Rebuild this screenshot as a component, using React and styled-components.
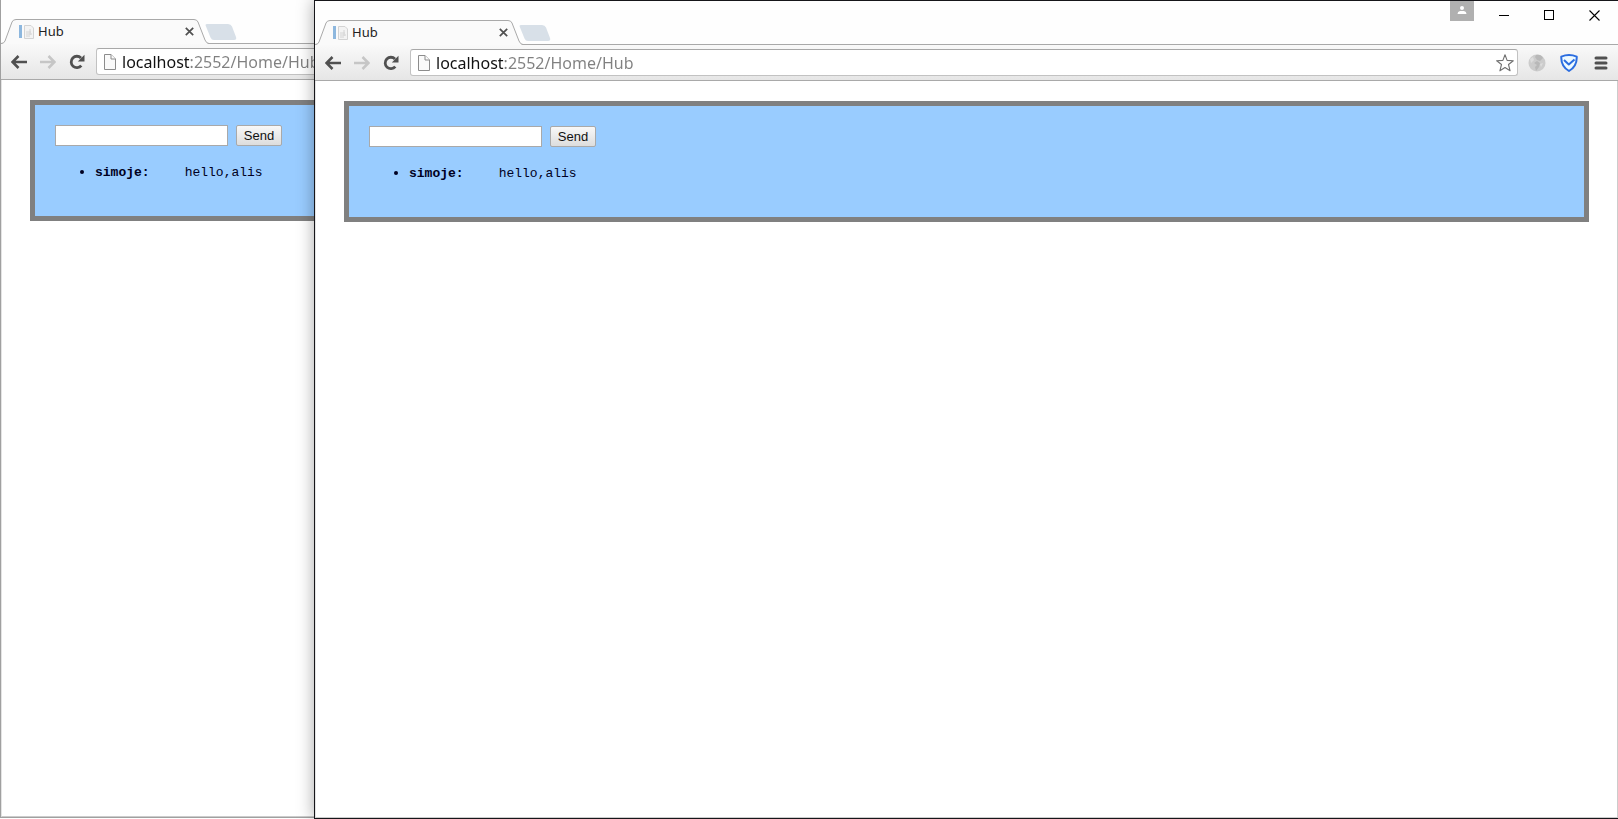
import React, { useState } from 'react';
import styled, { createGlobalStyle, ThemeProvider } from 'styled-components';

const theme = {
  colors: {
    chrome: '#fefefe',
    line: '#a9a9a9',
    icon: '#505050',
    iconMuted: '#c6c6c6',
    panel: '#99ccff',
    panelBorder: '#808080',
  },
  fonts: {
    ui: '"Noto Sans", "Open Sans", sans-serif',
    control: '"Liberation Sans", Arial, sans-serif',
    page: '"Liberation Mono", monospace',
  },
};

const GlobalStyle = createGlobalStyle`
  * {
    box-sizing: border-box;
  }

  body {
    margin: 0;
    background: #ffffff;
  }

  button,
  input {
    margin: 0;
    padding: 0;
  }
`;

const Desktop = styled.div`
  position: relative;
  height: 100vh;
  overflow: hidden;
`;

const Window = styled.section`
  position: absolute;
  top: 0;
  bottom: ${props => (props.$active ? '0' : '1px')};
  left: ${props => (props.$active ? '314px' : '0')};
  width: calc(100% - 314px);
  display: flex;
  flex-direction: column;
  background: ${props => props.theme.colors.chrome};
  border: 1px solid ${props => (props.$active ? '#16161a' : '#a0a0a0')};
  border-top-width: ${props => (props.$active ? '1px' : '0')};
  border-right-width: 0;
  box-shadow: ${props => (props.$active ? '0 0 16px rgba(0, 0, 0, 0.35)' : 'none')};
`;

const TabStrip = styled.header`
  display: flex;
  justify-content: space-between;
  height: 44px;
  border-bottom: 1px solid ${props => props.theme.colors.line};
`;

const Tabs = styled.div`
  display: flex;
  align-items: flex-end;
`;

const Tab = styled.div`
  position: relative;
  display: flex;
  align-items: center;
  gap: 3px;
  width: 206px;
  height: 25px;
  margin-bottom: -1px;
  padding: 0 10px 1px 18px;
  font: 13px/16px ${props => props.theme.fonts.ui};
  color: #222222;
`;

const TabShape = styled.svg`
  position: absolute;
  top: 0;
  left: 0;
`;

const TabIcon = styled.svg`
  position: relative;
`;

const TabTitle = styled.span`
  position: relative;
  flex: 1;
`;

const IconButton = styled.button`
  position: relative;
  display: flex;
  align-items: center;
  justify-content: center;
  flex: none;
  width: ${props => props.$width || 16}px;
  height: ${props => props.$height || 16}px;
  border: 0;
  background: ${props => props.$background || 'none'};
  color: ${props => (props.$muted ? props.theme.colors.iconMuted : props.theme.colors.icon)};

  svg {
    flex: none;
  }
`;

const NewTab = styled(IconButton)`
  align-self: flex-end;
  margin-bottom: 3px;
  margin-left: -2px;
`;

const WindowControls = styled.div`
  display: flex;
  align-items: flex-start;
  padding-right: 1px;
`;

const Profile = styled(IconButton)`
  margin-right: 8px;
`;

const Toolbar = styled.div`
  display: flex;
  align-items: center;
  height: 36px;
  padding: 0 9px 0 10px;
  background: linear-gradient(#f9f9f9, #e6e6e6);
  border-bottom: 1px solid ${props => props.theme.colors.line};
`;

const NavButtons = styled.div`
  display: flex;
  gap: 13px;
  margin-right: 11px;
`;

const Extensions = styled.div`
  display: flex;
  gap: 16px;
  margin-left: 11px;
`;

const Omnibox = styled.div`
  flex: 1;
  display: flex;
  align-items: center;
  gap: 6px;
  height: 27px;
  padding: 0 3px 0 7px;
  background: #ffffff;
  border: 1px solid #c2c2c2;
  border-top-color: #a8a8a8;
  border-radius: 3px;
`;

const Address = styled.input`
  flex: 1;
  min-width: 0;
  height: 24px;
  border: 0;
  outline: 0;
  font: 16px/24px ${props => props.theme.fonts.ui};
  color: transparent;
  background: linear-gradient(to right, #111111 68px, #808080 68px);
  background-clip: text;
`;

const Page = styled.main`
  flex: 1;
  padding: 20px 28px;
  background: #ffffff;
  border: 1px solid #cccccc;
  border-top: 0;
  border-left-color: #e4e4e4;
`;

const ChatPanel = styled.div`
  padding: 20px;
  background: ${props => props.theme.colors.panel};
  border: 5px solid ${props => props.theme.colors.panelBorder};
`;

const MessageForm = styled.form`
  display: flex;
  gap: 8px;
  height: 22px;
`;

const MessageInput = styled.input`
  width: 173px;
  height: 21px;
  padding: 1px 2px;
  border: 1px solid #a9a9a9;
  background: #ffffff;
  font: 13px ${props => props.theme.fonts.control};
`;

const SendButton = styled.button`
  width: 46px;
  height: 21px;
  border: 1px solid #a9a9a9;
  border-radius: 2px;
  background: linear-gradient(#f8f8f8, #dddddd);
  font: 13px/16px ${props => props.theme.fonts.control};
  color: #111111;
`;

const MessageList = styled.ul`
  margin: 16px 0 14px;
  padding-left: 40px;
  font: 13px/19px ${props => props.theme.fonts.page};
  color: #000022;
`;

const Message = styled.li`
  &::marker {
    font-size: 16px;
  }
`;

const MessageText = styled.span`
  margin-left: 35px;
`;

const BackIcon = ({ flipped }) => (
  <svg width="16" height="14" viewBox="0 0 16 14" fill="none" stroke="currentColor" strokeWidth="2.6">
    <path d={flipped ? 'M0 7H14M8.5 1l6 6-6 6' : 'M16 7H2M7.5 1l-6 6 6 6'} />
  </svg>
);

const ReloadIcon = () => (
  <svg width="16" height="16" viewBox="0 0 16 16">
    <path d="M12.3 11.6A5.7 5.7 0 1 1 12 4" fill="none" stroke="currentColor" strokeWidth="2.8" />
    <path d="M15.5 0.8V7.5H8.8z" fill="currentColor" />
  </svg>
);

const FileIcon = () => (
  <svg width="12" height="16" viewBox="0 0 12 16" fill="#fafafa" stroke="#8c8c8c">
    <path d="M0.5 0.5H7L11.5 5V15.5H0.5z" />
    <path d="M7 0.5V5H11.5" />
  </svg>
);

const StarIcon = () => (
  <svg width="18" height="18" viewBox="0 0 18 18" fill="#ffffff" stroke="#707070" strokeWidth="1.1" strokeLinejoin="round">
    <path d="M9 0.8L11.1 6.4L17.3 6.7L12.5 10.5L14.1 16.8L9 13.5L3.9 16.8L5.5 10.5L0.7 6.7L6.9 6.4z" />
  </svg>
);

const GlobeIcon = () => (
  <svg width="18" height="18" viewBox="0 0 18 18">
    <circle cx="9" cy="9" r="8.5" fill="#cccccc" />
    <path d="M8 1q5-1 7 3l-3 3-3-1-2-3zM9 7l3 2-1 4-3 4-1-4 2-2-3-2z" fill="#b8b8b8" />
    <path d="M2 5l3-2 1 3-3 3zM12 10l3-1-2 4z" fill="#dddddd" />
  </svg>
);

const ShieldIcon = () => (
  <svg width="18" height="18" viewBox="0 0 18 18" fill="#eefaff" stroke="#2b6de0" strokeWidth="2" strokeLinejoin="round">
    <path d="M1.3 2.6Q9 -0.4 16.7 2.6Q17.2 12 9 17Q0.8 12 1.3 2.6z" />
    <path d="M4 6L8.8 10.5L14.5 5.5" fill="none" />
  </svg>
);

const MenuIcon = () => (
  <svg width="14" height="14" viewBox="0 0 14 14" stroke="currentColor" strokeWidth="3" strokeLinecap="round">
    <path d="M2 2H12M2 7H12M2 12H12" />
  </svg>
);

const BrowserTab = ({ title }) => (
  <Tab>
    <TabShape width="208" height="25" viewBox="0 0 208 25">
      <path d="M0 25Q3 24.5 4 22L11 3Q12 0.5 15 0.5H193Q196 0.5 197 3L204 21Q205.5 24.5 208 25z" fill="#fafafa" />
      <path d="M0 24.5Q3 24.5 4 22L11 3Q12 0.5 15 0.5H193Q196 0.5 197 3L204 21Q205.5 24.5 208 24.5" fill="none" stroke="#a9a9a9" />
    </TabShape>
    <TabIcon width="16" height="16" viewBox="0 0 16 16">
      <rect x="0" y="2" width="3" height="13" fill="#8db7de" />
      <path d="M5.5 2.5H12L14.5 5V15.5H5.5z" fill="#f3f3f3" stroke="#d3d3d3" />
      <path d="M7 9H12M7 11H13M7 13H11M11 6V12" stroke="#d4d4d4" />
    </TabIcon>
    <TabTitle>{title}</TabTitle>
    <IconButton aria-label="Close tab">
      <svg width="9" height="9" viewBox="0 0 9 9" stroke="currentColor" strokeWidth="1.7">
        <path d="M0.8 0.8L8.2 8.2M8.2 0.8L0.8 8.2" />
      </svg>
    </IconButton>
  </Tab>
);

const Controls = () => (
  <WindowControls>
    <Profile aria-label="Profile" $width={24} $height={20} $background="#b0b0b0">
      <svg width="10" height="10" viewBox="0 0 10 10" fill="#ffffff">
        <circle cx="5" cy="2" r="2" />
        <path d="M0.5 8Q0.5 5.5 3 5H7Q9.5 5.5 9.5 8z" />
      </svg>
    </Profile>
    <IconButton aria-label="Minimize" $width={45} $height={28}>
      <svg width="11" height="11" viewBox="0 0 11 11" stroke="#000000">
        <path d="M0 5.5H10" />
      </svg>
    </IconButton>
    <IconButton aria-label="Maximize" $width={45} $height={28}>
      <svg width="11" height="11" viewBox="0 0 11 11" fill="none" stroke="#000000">
        <rect x="0.5" y="0.5" width="9" height="9" />
      </svg>
    </IconButton>
    <IconButton aria-label="Close" $width={45} $height={28}>
      <svg width="11" height="11" viewBox="0 0 11 11" stroke="#000000" strokeWidth="1.1">
        <path d="M0.5 0.5L10.5 10.5M10.5 0.5L0.5 10.5" />
      </svg>
    </IconButton>
  </WindowControls>
);

const Chat = () => {
  const [text, setText] = useState('');
  const [messages, setMessages] = useState([{ name: 'simoje', text: 'hello,alis' }]);

  const handleSubmit = e => {
    e.preventDefault();
    if (!text) return;
    setMessages([...messages, { name: 'simoje', text }]);
    setText('');
  };

  return (
    <ChatPanel>
      <MessageForm onSubmit={handleSubmit}>
        <MessageInput aria-label="Message" value={text} onChange={e => setText(e.target.value)} />
        <SendButton type="submit">Send</SendButton>
      </MessageForm>
      <MessageList>
        {messages.map((message, i) => (
          <Message key={i}>
            <strong>{message.name}:</strong>
            <MessageText>{message.text}</MessageText>
          </Message>
        ))}
      </MessageList>
    </ChatPanel>
  );
};

const BrowserWindow = ({ active }) => (
  <Window $active={active}>
    <TabStrip>
      <Tabs>
        <BrowserTab title="Hub" />
        <NewTab aria-label="New tab" $width={32} $height={16}>
          <svg width="32" height="16" viewBox="0 0 32 16">
            <path d="M2 0H23Q26 0 27 2.5L31 13Q32 16 29 16H9Q6.5 16 5.5 13.5L0.8 2Q0 0 2 0z" fill="#d8e0e8" />
          </svg>
        </NewTab>
      </Tabs>
      <Controls />
    </TabStrip>
    <Toolbar>
      <NavButtons>
        <IconButton aria-label="Back"><BackIcon /></IconButton>
        <IconButton aria-label="Forward" $muted><BackIcon flipped /></IconButton>
        <IconButton aria-label="Reload"><ReloadIcon /></IconButton>
      </NavButtons>
      <Omnibox>
        <FileIcon />
        <Address aria-label="Address" defaultValue="localhost:2552/Home/Hub" />
        <IconButton aria-label="Bookmark" $width={18} $height={18}><StarIcon /></IconButton>
      </Omnibox>
      <Extensions>
        <IconButton aria-label="Globe extension"><GlobeIcon /></IconButton>
        <IconButton aria-label="Shield extension"><ShieldIcon /></IconButton>
        <IconButton aria-label="Menu"><MenuIcon /></IconButton>
      </Extensions>
    </Toolbar>
    <Page>
      <Chat />
    </Page>
  </Window>
);

export default function App() {
  return (
    <ThemeProvider theme={theme}>
      <GlobalStyle />
      <Desktop>
        <BrowserWindow />
        <BrowserWindow active />
      </Desktop>
    </ThemeProvider>
  );
}
